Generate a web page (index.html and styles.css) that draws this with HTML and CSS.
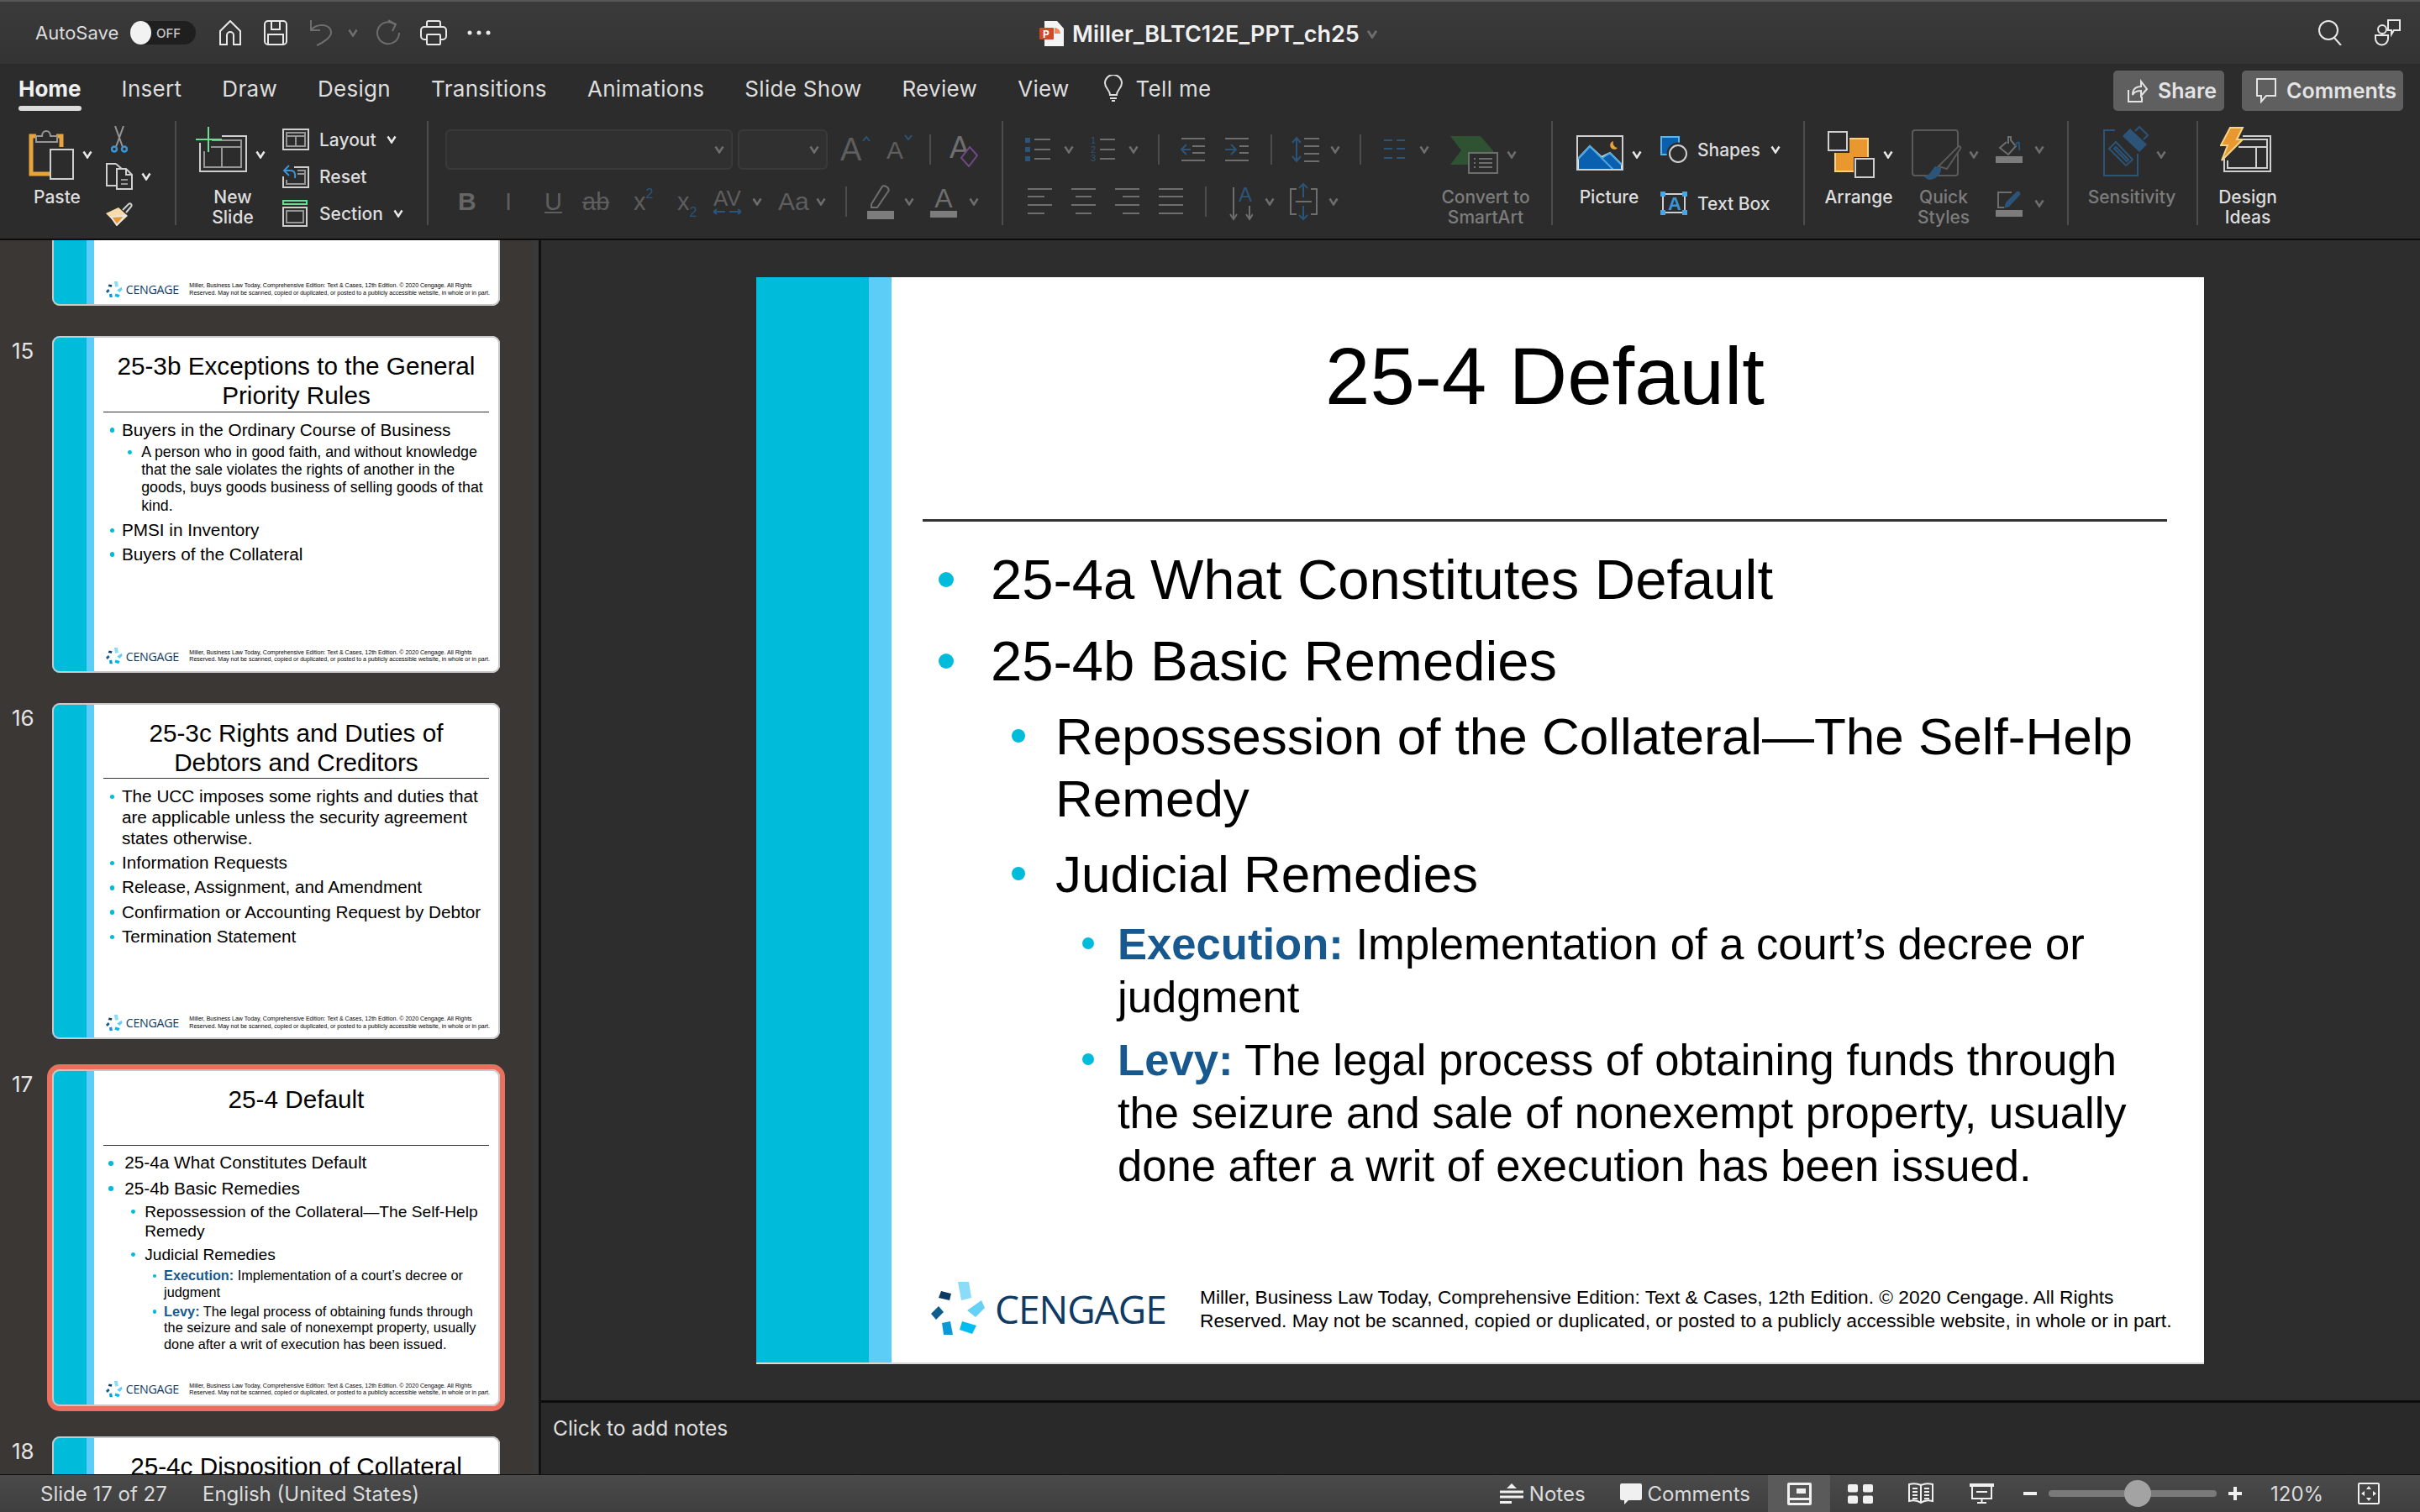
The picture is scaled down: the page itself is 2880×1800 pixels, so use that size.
FILE: index.html
```html
<!DOCTYPE html>
<html lang="en">
<head>
    <meta charset="UTF-8">
    <title>Miller_BLTC12E_PPT_ch25</title>
    <link rel="stylesheet" href="styles.css">
</head>
<body>
    <svg class="defs" width="0" height="0">
        <symbol id="chev" viewBox="0 0 12 10"><path d="M1.5 1.5L6 8.5l4.500-7"/></symbol>
        <symbol id="logo" viewBox="0 0 64 63">
            <path class="p1" d="M32 0h13l3 19-12 3z"/>
            <path class="p2" d="M60 22l4 9-11 11-10-8z"/>
            <path class="p3" d="M37 47l17 5-5 10-15-5z"/>
            <path class="p4" d="M13 49l10-2 3 16H15z"/>
            <path class="p5" d="M9 29l6 7-9 9-6-7z"/>
            <path class="p6" d="M12 11l12 3-2 8-13-3z"/>
        </symbol>
    </svg>

    <header class="titlebar">
        <div class="qat">
            <span class="autosave">AutoSave</span>
            <span class="toggle"><i class="knob"></i><b>OFF</b></span>
            <svg class="i-home" width="28" height="30" viewBox="0 0 28 30"><path d="M14 1L2 13v16h8V18a4 4 0 0 1 8 0v11h8V13z"/></svg>
            <svg class="i-save" width="28" height="30" viewBox="0 0 28 30"><rect x="1" y="1" width="26" height="28" rx="4"/><path d="M9 1v10h10V1M5 29V17h18v12"/></svg>
            <svg class="i-undo off" width="30" height="32" viewBox="0 0 30 32"><path d="M2 1v12h11M2 13c7-9 24-8 24 3 0 5-8 11-17 15"/></svg>
            <svg class="i-uchev off" width="12" height="10"><use href="#chev"/></svg>
            <svg class="i-redo off" width="30" height="32" viewBox="0 0 30 32"><path d="M23 6a13 13 0 1 0 5 10M15 1l9 5-4 8"/></svg>
            <svg class="i-print" width="32" height="30" viewBox="0 0 32 30"><path d="M8 8V3a2 2 0 0 1 2-2h12a2 2 0 0 1 2 2v5"/><rect x="1" y="8" width="30" height="15" rx="4"/><rect x="8" y="17" width="16" height="12" rx="1" class="fill-bar"/></svg>
            <svg class="i-dots" width="28" height="8" viewBox="0 0 28 8"><circle cx="3" cy="4" r="2.500"/><circle cx="14" cy="4" r="2.500"/><circle cx="25" cy="4" r="2.500"/></svg>
        </div>
        <div class="doc-title">
            <svg width="30" height="30" viewBox="0 0 30 30" class="ppt"><path class="ppt-page" d="M6 0h15l8 9v21H6z"/><rect class="ppt-red" x="0" y="8" width="17" height="14" rx="1"/><path class="ppt-pie" d="M18 8a7 7 0 0 1 7 7h-7z"/><text class="ppt-p" x="4" y="20">P</text></svg>
            <span>Miller_BLTC12E_PPT_ch25</span>
            <svg class="off" width="16" height="11"><use href="#chev"/></svg>
        </div>
        <div class="top-right">
            <svg width="28" height="30" viewBox="0 0 28 30"><circle cx="12" cy="12" r="11"/><path d="M19 21l8 9"/></svg>
            <svg width="32" height="32" viewBox="0 0 32 32"><circle cx="10" cy="12" r="5"/><path d="M2 19h15v4a7.500 7.500 0 0 1-15 0zM17 1h14v12h-7l-3 5v-5h-4z"/></svg>
        </div>
    </header>

    <section class="ribbon">
        <nav class="tabs">
            <a class="tab active">Home</a><a class="tab">Insert</a><a class="tab">Draw</a><a class="tab">Design</a><a class="tab">Transitions</a><a class="tab">Animations</a><a class="tab">Slide Show</a><a class="tab">Review</a><a class="tab">View</a>
            <span class="tell">
                <svg width="22" height="32" viewBox="0 0 22 32"><path d="M7 24c0-6-6-8-6-14a10 10 0 0 1 20 0c0 6-6 8-6 14zM7 28h8M9 31h4"/></svg>
                Tell me
            </span>
            <span class="share-btns">
                <button class="btn btn-share">
                    <svg width="24" height="30" viewBox="0 0 24 30"><path d="M1 14v14h16v-6M6 20c0-7 4-10 10-10V4l7 9-7 8v-6c-5 0-8 1-10 5z"/></svg>
                    Share
                </button>
                <button class="btn btn-comments">
                    <svg width="24" height="30" viewBox="0 0 24 30"><path d="M1 1h22v20H12l-6 7v-7H1z"/></svg>
                    Comments
                </button>
            </span>
        </nav>

        <div class="groups">
            <div class="group g-clip">
                <div class="big w80">
                    <div class="big-icon pl6">
                        <svg width="54" height="61" viewBox="0 0 54 61"><path class="s-orange" d="M9 9H3v45h22M33 9h6v13"/><path class="s-grey f-bar" d="M9 16V9h7c0-8 10-8 10 0h8v7z"/><rect class="s-light f-bar" x="26" y="25" width="27" height="35"/></svg>
                        <svg class="chev-big" width="12" height="10"><use href="#chev"/></svg>
                    </div>
                    <span class="label">Paste</span>
                </div>
                <div class="stack3 ml18">
                    <div class="srow"><svg class="ml6" width="20" height="32" viewBox="0 0 20 32"><path class="s-grey" d="M5 0l9 25M15 0L6 25"/><circle class="s-blue thick f-bar" cx="4" cy="27.500" r="3"/><circle class="s-blue thick f-bar" cx="16" cy="27.500" r="3"/></svg></div>
                    <div class="srow"><svg width="32" height="32" viewBox="0 0 32 32"><path class="s-light" d="M12 1H1v26h11M12 1l8 7"/><path class="s-light f-bar" d="M13 7h11l7 7v17H13z"/><path class="s-light" d="M24 7v7h7"/><path class="s-grey" d="M18 20h8M18 25h8"/></svg><svg class="ml10" width="12" height="10"><use href="#chev"/></svg></div>
                    <div class="srow"><svg width="32" height="30" viewBox="0 0 32 30"><path class="s-light" d="M20 11l7-7c2-2 5 1 3 3l-6 7"/><path class="f-yellow" d="M0 15l15-7 11 10-12 11z"/><path class="f-orange" d="M6 19l17-1-10 11z"/></svg></div>
                </div>
            </div>

            <div class="group g-slides">
                <div class="big w100">
                    <div class="big-icon pl6">
                        <svg class="up6" width="61" height="54" viewBox="0 0 61 54"><path class="s-light" d="M31 11h29v42H5V19"/><path class="s-grey" d="M19 16h35v32H10V29M18 24h36M31 24v24"/><path class="s-green" d="M15 0v30M0 15h31"/></svg>
                        <svg class="chev-big" width="12" height="10"><use href="#chev"/></svg>
                    </div>
                    <span class="label">New<br>Slide</span>
                </div>
                <div class="stack3 ml9">
                    <div class="srow"><svg width="32" height="26" viewBox="0 0 32 26"><rect class="s-light" x="1" y="1" width="30" height="24"/><path class="s-grey" d="M5 5h22v16H5zM5 9h22M16 9v12"/></svg><span class="cmd">Layout</span><svg class="ml12" width="12" height="10"><use href="#chev"/></svg></div>
                    <div class="srow"><svg width="32" height="28" viewBox="0 0 32 28"><path class="s-light" d="M1 14v13h30V3H14"/><path class="s-grey" d="M18 7h9v16H5v-5M18 11h9"/><path class="s-blue" d="M8 1L2 7l6 6M2 7h8c4 0 6 3 5 9"/></svg><span class="cmd">Reset</span></div>
                    <div class="srow"><svg width="30" height="32" viewBox="0 0 30 32"><rect class="s-green" x="1" y="1" width="28" height="4"/><rect class="s-light" x="1" y="9" width="28" height="22"/><rect class="s-grey" x="5" y="13" width="20" height="14"/></svg><span class="cmd cmd-sec">Section</span><svg class="ml12" width="12" height="10"><use href="#chev"/></svg></div>
                </div>
            </div>

            <div class="group g-font off">
                <div class="row font-r1">
                    <span class="combo"><svg width="12" height="10"><use href="#chev"/></svg></span>
                    <span class="combo"><svg width="12" height="10"><use href="#chev"/></svg></span>
                    <span class="glyph g-a1">A<svg class="caret" width="10" height="7" viewBox="0 0 10 7"><path class="s-bluedim" d="M1 6l4-5 4 5"/></svg></span>
                    <span class="glyph g-a2">A<svg class="caret" width="10" height="7" viewBox="0 0 10 7"><path class="s-bluedim" d="M1 1l4 5 4-5"/></svg></span>
                    <i class="vsep"></i>
                    <svg width="34" height="46" viewBox="0 0 34 46"><text class="svgt t-clear" x="0" y="33">A</text><path class="s-purple f-bar" d="M24 20l9 10-10 13-9-10z"/></svg>
                </div>
                <div class="row font-r2">
                    <b class="glyph">B</b>
                    <i class="glyph thin">I</i>
                    <u class="glyph">U</u>
                    <s class="glyph">ab</s>
                    <span class="glyph">x<sup>2</sup></span>
                    <span class="glyph">x<sub>2</sub></span>
                    <span class="av">AV<svg width="33" height="8" viewBox="0 0 33 8"><path class="s-bluedim" d="M0 4h14M4 1L0 4l4 3M19 4h14M29 1l4 3-4 3"/></svg></span>
                    <svg width="12" height="10"><use href="#chev"/></svg>
                    <span class="glyph aa">Aa</span>
                    <svg width="12" height="10"><use href="#chev"/></svg>
                    <i class="vsep"></i>
                    <svg width="32" height="42" viewBox="0 0 32 42"><path d="M5 24L18 3c2-2 5 0 7 2 1 2 1 3 0 4L12 28H5z"/><rect class="f-grey" x="0" y="32" width="32" height="10"/></svg>
                    <svg width="12" height="10"><use href="#chev"/></svg>
                    <span class="afill">A<i></i></span>
                    <svg width="12" height="10"><use href="#chev"/></svg>
                </div>
            </div>

            <div class="group g-para off">
                <div class="para-rows">
                    <div class="row para-r1">
                        <svg width="30" height="30" viewBox="0 0 30 30"><path class="f-bluedim" d="M0 1h6v6H0zM0 12h6v6H0zM0 23h6v6H0z"/><path d="M11 3h19M11 15h19M11 26h19"/></svg>
                        <svg width="12" height="10"><use href="#chev"/></svg>
                        <svg width="30" height="34" viewBox="0 0 30 34"><text class="svgt t-num" x="1" y="10">1</text><text class="svgt t-num" x="1" y="20.500">2</text><text class="svgt t-num" x="1" y="31">3</text><path d="M12 5h18M12 17h18M12 28h18"/></svg>
                        <svg width="12" height="10"><use href="#chev"/></svg>
                        <i class="vsep"></i>
                        <svg width="30" height="28" viewBox="0 0 30 28"><path d="M1 1h28M14 10h15M14 18h15M1 27h28"/><path class="s-bluedim" d="M12 14H2M7 8l-6 6 6 6"/></svg>
                        <svg width="30" height="28" viewBox="0 0 30 28"><path d="M1 1h28M18 10h11M18 18h11M1 27h28"/><path class="s-bluedim" d="M1 14h12M8 8l6 6-6 6"/></svg>
                        <i class="vsep"></i>
                        <svg width="33" height="32" viewBox="0 0 33 32"><path class="s-bluedim" d="M6 3v26M1 8l5-6 5 6M1 24l5 6 5-6"/><path d="M15 3h18M15 12h18M15 21h18M15 30h18"/></svg>
                        <svg width="12" height="10"><use href="#chev"/></svg>
                        <i class="vsep"></i>
                        <svg width="26" height="26" viewBox="0 0 26 26"><path class="s-bluedim" d="M0 2h10M15 2h10M0 12h10M15 12h10M0 23h10M15 23h10"/></svg>
                        <svg width="12" height="10"><use href="#chev"/></svg>
                    </div>
                    <div class="row para-r2">
                        <svg width="29" height="44" viewBox="0 0 29 44"><path d="M0 7h29M0 16h20M0 26h29M0 36h20"/></svg>
                        <svg width="29" height="44" viewBox="0 0 29 44"><path d="M0 7h29M5 16h19M0 26h29M5 36h19"/></svg>
                        <svg width="29" height="44" viewBox="0 0 29 44"><path d="M0 7h29M9 16h20M0 26h29M9 36h20"/></svg>
                        <svg width="29" height="44" viewBox="0 0 29 44"><path d="M0 7h29M0 16h29M0 26h29M0 36h29"/></svg>
                        <i class="vsep"></i>
                        <svg width="28" height="46" viewBox="0 0 28 46"><path d="M5 6v38M1 38l4 6 4-6M24 28v16M20 38l4 6 4-6"/><text class="svgt t-dir" x="11" y="23">A</text></svg>
                        <svg width="12" height="10"><use href="#chev"/></svg>
                        <svg width="33" height="46" viewBox="0 0 33 46"><path d="M8 8H1v30h7M25 8h7v30h-7M7 23h19"/><path class="s-bluedim" d="M16 18V2M11 7l5-5 5 5M16 28v16M11 39l5 5 5-5"/></svg>
                        <svg width="12" height="10"><use href="#chev"/></svg>
                    </div>
                </div>
                <div class="big w120">
                    <div class="big-icon pl17">
                        <svg width="58" height="46" viewBox="0 0 58 46"><path class="f-dgreen" d="M1 1h36l17 20H24v14H1l13-17z"/><rect class="s-dgrey f-bar" x="23" y="21" width="34" height="24"/><path class="s-dgrey" d="M29 28h2M35 28h16M29 33h2M35 33h16M29 38h2M35 38h16"/></svg>
                        <svg class="chev-big" width="12" height="10"><use href="#chev"/></svg>
                    </div>
                    <span class="label">Convert to<br>SmartArt</span>
                </div>
            </div>

            <div class="group g-insert">
                <div class="big w100">
                    <div class="big-icon pl11">
                        <svg class="up2" width="56" height="42" viewBox="0 0 56 42"><path class="f-blue" d="M2 41V28l14-15 14 13 10-5 14 14v6z"/><path class="s-skyline" d="M2 28l14-15 28 28M31 27l9-6 14 14"/><rect class="s-light" x="1" y="1" width="54" height="40"/><path class="f-sun" d="M44 7a5 5 0 1 0 5 8 6 6 0 0 1-5-8z"/></svg>
                        <svg class="chev-big" width="12" height="10"><use href="#chev"/></svg>
                    </div>
                    <span class="label bright">Picture</span>
                </div>
                <div class="stack2 ml11">
                    <div class="srow"><svg width="32" height="32" viewBox="0 0 32 32"><rect class="f-blue s-skyblue" x="1" y="1" width="21" height="21"/><circle class="s-ring" cx="21" cy="21" r="11"/><circle class="s-light" cx="21" cy="21" r="10"/></svg><span class="cmd">Shapes</span><svg class="ml12" width="12" height="10"><use href="#chev"/></svg></div>
                    <div class="srow"><svg width="32" height="28" viewBox="0 0 32 28"><rect class="s-light" x="3" y="3" width="26" height="22"/><path class="f-blue3" d="M0 0h6v6H0zM26 0h6v6h-6zM0 22h6v6H0zM26 22h6v6h-6z"/><text class="svgt t-box" x="9" y="22">A</text></svg><span class="cmd">Text Box</span></div>
                </div>
            </div>

            <div class="group g-draw">
                <div class="big w100">
                    <div class="big-icon pl13">
                        <svg width="56" height="56" viewBox="0 0 56 56"><rect class="f-orange s-cream" x="9" y="9" width="39" height="39"/><rect class="f-bar s-bar" x="0" y="0" width="26" height="26"/><rect class="f-bar s-bar" x="31" y="31" width="25" height="25"/><rect class="s-light" x="1" y="1" width="22" height="22"/><rect class="s-light" x="33" y="33" width="22" height="22"/></svg>
                        <svg class="chev-big" width="12" height="10"><use href="#chev"/></svg>
                    </div>
                    <span class="label bright">Arrange</span>
                </div>
                <div class="big w90 ml6 off">
                    <div class="big-icon pl7">
                        <svg width="60" height="60" viewBox="0 0 60 60"><rect class="s-qs" x="1" y="1" width="54" height="54" rx="3"/><path class="s-qs f-bar" d="M32 44L55 21c2-2 4 0 3 2L42 47z"/><path class="f-bluedim" d="M15 56c7-1 9-8 13-12l7 2c1 6-5 13-13 14-3 0-6-2-7-4z"/></svg>
                        <svg class="chev-qs" width="12" height="10"><use href="#chev"/></svg>
                    </div>
                    <span class="label">Quick<br>Styles</span>
                </div>
                <div class="stack2 ml17 off">
                    <div class="srow"><svg width="32" height="32" viewBox="0 0 32 32"><path d="M13 7l-8 7 10 8 9-10-6-7V1h-3v8"/><path class="s-bluedim" d="M24 12c0-5 3-5 4-4-1 2 1 5 0 9"/><rect class="f-grey" x="0" y="24" width="32" height="8"/></svg><svg class="ml14" width="12" height="10"><use href="#chev"/></svg></div>
                    <div class="srow"><svg width="32" height="32" viewBox="0 0 32 32"><path d="M19 3H3v18h7"/><path class="f-bluedim" d="M10 22l2-7L25 2c2-2 6 2 4 4L16 20z"/><rect class="f-grey" x="0" y="24" width="32" height="8"/></svg><svg class="ml14" width="12" height="10"><use href="#chev"/></svg></div>
                </div>
            </div>

            <div class="group g-sens off">
                <div class="big w120">
                    <div class="big-icon pl26">
                        <svg class="up3" width="54" height="60" viewBox="0 0 54 60"><path class="s-bluedim" d="M14 5H1v54h40V33"/><path class="f-bluedim" d="M23 12l9-9 20 19-9 9z"/><path class="s-bluedim" d="M38 6l5-5 10 10-5 5M7 27l8-8 20 21-8 7zM13 27l2-2 15 15-2 2z"/></svg>
                        <svg class="chev-sens" width="12" height="10"><use href="#chev"/></svg>
                    </div>
                    <span class="label">Sensitivity</span>
                </div>
            </div>

            <div class="group g-ideas">
                <div class="big w100">
                    <div class="big-icon pl17">
                        <svg class="up6" width="61" height="54" viewBox="0 0 61 54"><path class="s-light" d="M27 11h33v42H5V38M23 15h33v34H9v-9M22 24h34M43 24v25"/><path class="f-orange s-cream" d="M12 1h15l-7 14h7L2 40l7-18H1z"/></svg>
                    </div>
                    <span class="label bright">Design<br>Ideas</span>
                </div>
            </div>
        </div>
    </section>

    <main class="workspace">
        <aside class="panel">
            <div class="thumbs">
                <div class="thumb-row">
                    <span class="num"></span>
                    <div class="slide thumb">
                        <div class="band"></div><div class="band-light"></div>
                        <div class="content">
                            <div class="foot">
                                <svg class="logo"><use href="#logo"/></svg>
                                <span class="wordmark">CENGAGE</span>
                                <p class="legal">Miller, Business Law Today, Comprehensive Edition: Text &amp; Cases, 12th Edition. © 2020 Cengage. All Rights<br>Reserved. May not be scanned, copied or duplicated, or posted to a publicly accessible website, in whole or in part.</p>
                            </div>
                        </div>
                    </div>
                </div>

                <div class="thumb-row">
                    <span class="num">15</span>
                    <div class="slide thumb">
                        <div class="band"></div><div class="band-light"></div>
                        <div class="content">
                            <h2 class="title">25-3b Exceptions to the General<br>Priority Rules</h2>
                            <ul class="body tight">
                                <li class="l1">Buyers in the Ordinary Course of Business</li>
                                <li class="l2 big-l2">A person who in good faith, and without knowledge that the sale violates the rights of another in the goods, buys goods business of selling goods of that kind.</li>
                                <li class="l1">PMSI in Inventory</li>
                                <li class="l1">Buyers of the Collateral</li>
                            </ul>
                            <div class="foot">
                                <svg class="logo"><use href="#logo"/></svg>
                                <span class="wordmark">CENGAGE</span>
                                <p class="legal">Miller, Business Law Today, Comprehensive Edition: Text &amp; Cases, 12th Edition. © 2020 Cengage. All Rights<br>Reserved. May not be scanned, copied or duplicated, or posted to a publicly accessible website, in whole or in part.</p>
                            </div>
                        </div>
                    </div>
                </div>

                <div class="thumb-row">
                    <span class="num">16</span>
                    <div class="slide thumb">
                        <div class="band"></div><div class="band-light"></div>
                        <div class="content">
                            <h2 class="title">25-3c Rights and Duties of<br>Debtors and Creditors</h2>
                            <ul class="body tight spaced">
                                <li class="l1">The UCC imposes some rights and duties that are applicable unless the security agreement states otherwise.</li>
                                <li class="l1">Information Requests</li>
                                <li class="l1">Release, Assignment, and Amendment</li>
                                <li class="l1">Confirmation or Accounting Request by Debtor</li>
                                <li class="l1">Termination Statement</li>
                            </ul>
                            <div class="foot">
                                <svg class="logo"><use href="#logo"/></svg>
                                <span class="wordmark">CENGAGE</span>
                                <p class="legal">Miller, Business Law Today, Comprehensive Edition: Text &amp; Cases, 12th Edition. © 2020 Cengage. All Rights<br>Reserved. May not be scanned, copied or duplicated, or posted to a publicly accessible website, in whole or in part.</p>
                            </div>
                        </div>
                    </div>
                </div>

                <div class="thumb-row">
                    <span class="num">17</span>
                    <div class="slide thumb selected">
                        <div class="band"></div><div class="band-light"></div>
                        <div class="content">
                            <h2 class="title">25-4 Default</h2>
                            <ul class="body">
                                <li class="l1">25-4a What Constitutes Default</li>
                                <li class="l1">25-4b Basic Remedies</li>
                                <li class="l2">Repossession of the Collateral—The Self-Help Remedy</li>
                                <li class="l2">Judicial Remedies</li>
                                <li class="l3"><b>Execution:</b> Implementation of a court’s decree or judgment</li>
                                <li class="l3"><b>Levy:</b> The legal process of obtaining funds through the seizure and sale of nonexempt property, usually done after a writ of execution has been issued.</li>
                            </ul>
                            <div class="foot">
                                <svg class="logo"><use href="#logo"/></svg>
                                <span class="wordmark">CENGAGE</span>
                                <p class="legal">Miller, Business Law Today, Comprehensive Edition: Text &amp; Cases, 12th Edition. © 2020 Cengage. All Rights<br>Reserved. May not be scanned, copied or duplicated, or posted to a publicly accessible website, in whole or in part.</p>
                            </div>
                        </div>
                    </div>
                </div>

                <div class="thumb-row">
                    <span class="num">18</span>
                    <div class="slide thumb">
                        <div class="band"></div><div class="band-light"></div>
                        <div class="content">
                            <h2 class="title">25-4c Disposition of Collateral</h2>
                        </div>
                    </div>
                </div>
            </div>
        </aside>

        <div class="editor">
            <div class="canvas">
                <div class="slide main-slide">
                    <div class="band"></div><div class="band-light"></div>
                    <div class="content">
                        <h1 class="title">25-4 Default</h1>
                        <ul class="body">
                            <li class="l1">25-4a What Constitutes Default</li>
                            <li class="l1">25-4b Basic Remedies</li>
                            <li class="l2">Repossession of the Collateral—The Self-Help Remedy</li>
                            <li class="l2">Judicial Remedies</li>
                            <li class="l3"><b>Execution:</b> Implementation of a court’s decree or judgment</li>
                            <li class="l3"><b>Levy:</b> The legal process of obtaining funds through the seizure and sale of nonexempt property, usually done after a writ of execution has been issued.</li>
                        </ul>
                        <div class="foot">
                            <svg class="logo"><use href="#logo"/></svg>
                            <span class="wordmark">CENGAGE</span>
                            <p class="legal">Miller, Business Law Today, Comprehensive Edition: Text &amp; Cases, 12th Edition. © 2020 Cengage. All Rights<br>Reserved. May not be scanned, copied or duplicated, or posted to a publicly accessible website, in whole or in part.</p>
                        </div>
                    </div>
                </div>
            </div>
            <div class="notes">Click to add notes</div>
        </div>
    </main>

    <footer class="statusbar">
        <span class="st-slide">Slide 17 of 27</span>
        <span class="st-lang">English (United States)</span>
        <div class="st-right">
            <span class="st-item">
                <svg width="28" height="24" viewBox="0 0 28 24"><path class="f-white" d="M14 0l6 6H8z"/><path class="s-white" d="M0 10h28M0 16h28M0 22.500h14"/></svg>
                Notes
            </span>
            <span class="st-item st-comments">
                <svg width="26" height="25" viewBox="0 0 26 25"><path class="f-white" d="M2 0h22a2 2 0 0 1 2 2v16a2 2 0 0 1-2 2H10l-5 5v-5H2a2 2 0 0 1-2-2V2a2 2 0 0 1 2-2z"/></svg>
                Comments
            </span>
            <span class="view active"><svg width="29" height="27" viewBox="0 0 29 27"><rect class="f-white" width="29" height="27" rx="2"/><path class="f-slate" d="M3 3h23v15H3zM3 21h23v3H3z"/><rect class="f-white" x="11" y="7" width="11" height="6"/></svg></span>
            <span class="view"><svg width="30" height="23" viewBox="0 0 30 23"><rect class="f-white" width="12" height="9.500" rx="2"/><rect class="f-white" x="18" width="12" height="9.500" rx="2"/><rect class="f-white" y="13.500" width="12" height="9.500" rx="2"/><rect class="f-white" x="18" y="13.500" width="12" height="9.500" rx="2"/></svg></span>
            <span class="view"><svg width="30" height="26" viewBox="0 0 30 26"><path class="s-thin" d="M15 3C11 1 5 1 1 2v20c4-1 10-1 14 2 4-3 10-3 14-2V2c-4-1-10-1-14 1zM15 3v21M5 7h6M5 11h6M5 15h6M5 19h6M19 7h6M19 11h6M19 15h6M19 19h6"/></svg></span>
            <span class="view"><svg width="29" height="24" viewBox="0 0 29 24"><rect class="f-white" width="29" height="4"/><path class="s-thin" d="M3 4v14h23V4M8 10h13M14.500 18v6M9 23h11"/></svg></span>
            <span class="zoom-minus"></span>
            <span class="slider"><i class="thumb-knob"></i></span>
            <span class="zoom-plus"></span>
            <span class="zoom-pct">120%</span>
            <svg class="fit" width="26" height="26" viewBox="0 0 26 26"><rect class="s-thin" x="1" y="1" width="24" height="24" rx="1"/><path class="f-white" d="M13 4l3 4h-6zM13 22l3-4h-6zM4 13l4-3v6zM22 13l-4-3v6z"/></svg>
        </div>
    </footer>
</body>
</html>
```

FILE: styles.css
```css
* {
    margin: 0;
    padding: 0;
    box-sizing: border-box;
}

html, body {
    width: 2880px;
    height: 1800px;
    overflow: hidden;
}

body {
    display: flex;
    flex-direction: column;
    font-family: 'Inter', 'Roboto', sans-serif;
    background: #2b2b2b;
    color: #e8e8e8;
}

svg {
    fill: none;
    stroke: currentColor;
    stroke-width: 2;
    flex: none;
}

.defs { position: absolute; }
#chev path { stroke-width: 2.5; }

/* title bar */
.titlebar {
    height: 76px;
    flex: none;
    display: flex;
    align-items: center;
    position: relative;
    border-top: 2px solid #565656;
    background: linear-gradient(#3a3a3a, #343434);
}

.qat {
    display: flex;
    align-items: center;
    padding-left: 42px;
}

.autosave { font-size: 22px; color: #dcdcdc; width: 113px; }

.toggle {
    width: 78px;
    height: 28px;
    border-radius: 14px;
    background: #1f1f1f;
    display: flex;
    align-items: center;
    gap: 6px;
}
.toggle .knob { width: 25px; height: 28px; border-radius: 50%; background: #f2f2f2; }
.toggle b { font-size: 15px; font-weight: 500; color: #c8c8c8; }

.i-home { margin-left: 27px; }
.i-save { margin-left: 26px; }
.i-undo { margin-left: 26px; }
.i-uchev { margin-left: 16px; }
.i-redo { margin-left: 21px; }
.i-print { margin-left: 23px; }
.i-dots { margin-left: 24px; fill: #e8e8e8; stroke: none; }

.off { color: #6e6e6e; }

.doc-title {
    position: absolute;
    left: 1237px;
    top: 1px;
    height: 74px;
    display: flex;
    align-items: center;
    font-size: 27px;
    font-weight: 600;
    color: #f0f0f0;
    white-space: nowrap;
}
.doc-title .ppt { margin-right: 9px; stroke: none; }
.doc-title span { margin-right: 7px; }
.ppt-page { fill: #f4f4f4; }
.ppt-red { fill: #d04a2a; }
.ppt-pie { fill: #f08a5c; }
.ppt-p { fill: #fff; font-size: 12px; font-weight: 700; }

.top-right {
    margin-left: auto;
    display: flex;
    align-items: center;
    gap: 38px;
    padding-right: 23px;
}

/* ribbon */
.ribbon {
    height: 210px;
    flex: none;
    background: #2c2c2c;
    border-bottom: 2px solid #0c0c0c;
}

.tabs {
    height: 68px;
    display: flex;
    align-items: center;
    padding: 0 0 10px 22px;
    font-size: 26px;
    letter-spacing: 0.3px;
    position: relative;
    color: #dedede;
}

.tab { margin-right: 48px; position: relative; }
.tab.active { font-weight: 700; color: #f0f0f0; letter-spacing: 0; }
.tab.active::after {
    content: "";
    position: absolute;
    left: 0;
    right: 0;
    top: 36px;
    height: 6px;
    border-radius: 3px;
    background: #dcdcdc;
}

.tell { display: flex; align-items: center; gap: 16px; margin-left: -7px; }

.share-btns {
    margin-left: auto;
    display: flex;
    gap: 21px;
    padding-right: 20px;
    margin-top: 6px;
}

.btn {
    height: 48px;
    border: none;
    border-radius: 5px;
    background: #5f5f5f;
    color: #e4e4e4;
    font: 600 25px 'Inter', sans-serif;
    display: flex;
    align-items: center;
    gap: 12px;
}
.btn-share { width: 132px; padding-left: 17px; }
.btn-comments { width: 192px; padding-left: 17px; }

.groups { display: flex; height: 124px; }

.group {
    height: 124px;
    display: flex;
    align-items: flex-start;
    border-right: 2px solid #4d4d4d;
    flex: none;
}
.g-clip { width: 210px; padding-left: 28px; }
.g-slides { width: 300px; padding-left: 17px; }
.g-font { width: 684px; padding-left: 20px; padding-top: 10px; flex-direction: column; align-items: stretch; }
.g-para { width: 654px; padding-left: 26px; padding-top: 10px; }
.g-insert { width: 300px; padding-left: 17px; }
.g-draw { width: 314px; padding-left: 14px; }
.g-sens { width: 154px; padding-left: 15px; }
.g-ideas { width: 200px; padding-left: 9px; border-right: none; }

.big { display: flex; flex-direction: column; flex: none; }
.big-icon { height: 79px; display: flex; align-items: center; }
.big .label {
    font-size: 21px;
    line-height: 24px;
    text-align: center;
    color: #dedede;
    font-weight: 500;
    white-space: nowrap;
}
.off .label { color: #7c7c7c; }
.g-para .big { margin-top: -10px; }
.g-para .big .label { color: #7c7c7c; }

.up2 { margin-bottom: 4px; }
.up3 { margin-bottom: 7px; }
.up6 { margin-bottom: 12px; }

.w80 { width: 80px; }
.w90 { width: 90px; }
.w100 { width: 100px; }
.w120 { width: 120px; }
.pl6 { padding-left: 6px; }
.pl7 { padding-left: 7px; }
.pl11 { padding-left: 11px; }
.pl13 { padding-left: 13px; }
.pl17 { padding-left: 17px; }
.pl26 { padding-left: 26px; }
.ml6 { margin-left: 6px; }
.ml9 { margin-left: 9px; }
.ml10 { margin-left: 10px; }
.ml11 { margin-left: 11px; }
.ml12 { margin-left: 12px; }
.ml14 { margin-left: 14px; }
.ml17 { margin-left: 17px; }
.ml18 { margin-left: 18px; }
.chev-big { margin-left: 10px; }
.chev-qs { margin-left: 8px; }
.chev-sens { margin-left: 9px; }

.stack3, .stack2 { display: flex; flex-direction: column; }
.stack3 .srow { height: 44px; display: flex; align-items: center; }
.stack2 { padding-top: 3px; }
.stack2 .srow { height: 62px; display: flex; align-items: center; }
.stack2 .srow + .srow { margin-top: 2px; }
.cmd { font-size: 21px; font-weight: 500; margin-left: 12px; color: #dedede; white-space: nowrap; }
.cmd-sec { margin-left: 14px; }

.row { display: grid; align-items: center; }
.font-r1 {
    height: 48px;
    grid-template-columns: 348px 122px 55px 51px 24px auto;
    justify-items: start;
}
.font-r2 {
    height: 48px;
    margin-top: 14px;
    margin-left: 15px;
    grid-template-columns: 56px 47px 45px 61px 52px 43px 46px 31px 45px 35px 26px 44px 31px 46px 12px;
    justify-items: start;
}

.combo {
    height: 48px;
    width: 342px;
    border: 2px solid #3a3a3a;
    border-radius: 6px;
    background: #303030;
    display: flex;
    align-items: center;
    justify-content: flex-end;
    padding-right: 8px;
}
.combo + .combo { width: 107px; }

.vsep { width: 2px; height: 36px; background: #4d4d4d; display: block; }

.glyph {
    font: 400 29px 'Liberation Sans', sans-serif;
    color: #5e5e5e;
    line-height: 36px;
    white-space: nowrap;
}
b.glyph { font-weight: 700; color: #666; font-size: 30px; }
.glyph sup, .glyph sub { font-size: 16px; color: #2c5478; }
.glyph sup { vertical-align: 14px; line-height: 0; }
.glyph sub { vertical-align: -8px; line-height: 0; }
.g-a1 { font-size: 38px; }
.g-a2 { font-size: 30px; }
.caret { margin-left: 1px; vertical-align: 22px; }
.aa { font-size: 30px; }

.svgt { fill: currentColor; stroke: none; font-family: 'Liberation Sans', sans-serif; }
.t-clear { font-size: 36px; }
.t-num { font-size: 11px; fill: #2c5478; }
.t-dir { font-size: 24px; fill: #2c5478; }
.t-box { font-size: 22px; font-weight: 700; fill: #3a94d6; }

.av {
    display: flex;
    flex-direction: column;
    align-items: center;
    font: 400 26px/24px 'Liberation Sans', sans-serif;
    color: #5e5e5e;
}

.afill {
    width: 32px;
    display: flex;
    flex-direction: column;
    align-items: center;
    font: 400 32px/30px 'Liberation Sans', sans-serif;
    color: #6e6e6e;
}
.afill i { display: block; width: 32px; height: 8px; background: #7c7c7c; }

.para-rows { width: 488px; flex: none; }
.para-r1 {
    height: 48px;
    grid-template-columns: 46px 31px 46px 35px 27px 52px 55px 25px 46px 35px 29px 42px 12px;
    justify-items: start;
}
.para-r2 {
    height: 48px;
    margin-top: 14px;
    margin-left: 3px;
    grid-template-columns: 52px 52px 52px 55px 29px 42px 30px 46px 12px;
    justify-items: start;
}

.s-orange { stroke: #e8a33c; stroke-width: 5; }
.s-grey { stroke: #969696; }
.s-light { stroke: #cfcfcf; }
.s-blue { stroke: #3a94d6; }
.thick { stroke-width: 2.5; }
.s-bluedim { stroke: #2c5478; }
.s-green { stroke: #6fdc8f; }
.s-purple { stroke: #6f4a86; }
.s-dgrey { stroke: #6e6e6e; }
.s-qs { stroke: #5a5a5a; }
.s-skyline { stroke: #4aa6e0; }
.s-skyblue { stroke: #5cb4ea; }
.s-cream { stroke: #f5d48a; }
.s-bar { stroke: none; }
.s-ring { stroke: #2c2c2c; stroke-width: 5; fill: #2c2c2c; }
.f-yellow { fill: #f5dcaa; stroke: none; }
.f-orange { fill: #e8982f; }
.f-grey { fill: #7c7c7c; stroke: none; }
.f-bluedim { fill: #2c5478; stroke: none; }
.f-dgreen { fill: #2f5233; stroke: none; }
.f-bar { fill: #2c2c2c; }
.fill-bar { fill: #343434; }
.f-blue { fill: #0a5fae; }
.f-blue3 { fill: #4aa6e0; stroke: none; }
.f-sun { fill: #e8a33c; stroke: none; }

/* workspace */
.workspace {
    flex: 1;
    display: flex;
    min-height: 0;
}

.panel {
    width: 644px;
    flex: none;
    overflow: hidden;
    background: linear-gradient(to right, #3b3735 633px, #3a3a3a 633px);
    border-right: 3px solid #111;
}

.thumbs {
    margin-top: -322px;
    display: flex;
    flex-direction: column;
    gap: 36px;
}

.thumb-row { display: flex; }

.num {
    width: 62px;
    flex: none;
    padding: 1px 0 0 14px;
    font-size: 26px;
    line-height: 34px;
    color: #e4e4e4;
}

/* slide: every length is a multiple of --u, so the thumbnails are the same slide scaled */
.slide {
    --u: 1px;
    width: calc(1723 * var(--u));
    height: calc(1294 * var(--u));
    flex: none;
    position: relative;
    display: flex;
    overflow: hidden;
    background: #fff;
    color: #000;
    font-family: 'Liberation Sans', Arial, sans-serif;
}

.thumb {
    --u: 0.3095px;
    border-radius: 9px;
}
.thumb::after {
    content: "";
    position: absolute;
    inset: 0;
    border: 2px solid #c9c9c9;
    border-radius: 9px;
}
.thumb.selected {
    overflow: visible;
    box-shadow: 0 0 0 6px #e8705c;
}
.thumb.selected .band { border-radius: 9px 0 0 9px; }

.main-slide { border-bottom: 2px solid #d8d8d8; }

.band { width: calc(134 * var(--u)); background: #00bcdb; flex: none; }
.band-light { width: calc(27 * var(--u)); background: #5bcdf7; flex: none; }

.content {
    flex: 1;
    min-width: 0;
    display: flex;
    flex-direction: column;
}

.title {
    height: calc(291 * var(--u));
    flex: none;
    padding-top: calc(61 * var(--u));
    font-size: calc(96 * var(--u));
    line-height: calc(113 * var(--u));
    font-weight: 400;
    text-align: center;
    border-bottom: calc(3 * var(--u)) solid #333;
    margin: 0 calc(44 * var(--u)) 0 calc(37 * var(--u));
}

.body {
    list-style: none;
    padding-top: calc(29 * var(--u));
    padding-right: calc(40 * var(--u));
}

.l1, .l2, .l3 { position: relative; }
.l1::before, .l2::before, .l3::before {
    content: "";
    position: absolute;
    border-radius: 50%;
    background: #00bcdb;
}

.l1 {
    font-size: calc(67 * var(--u));
    line-height: calc(80 * var(--u));
    margin: 0 0 calc(17 * var(--u)) calc(118 * var(--u));
}
.l1::before {
    width: calc(18 * var(--u));
    height: calc(18 * var(--u));
    left: calc(-62 * var(--u));
    top: calc(31 * var(--u));
}

.l2 {
    font-size: calc(62 * var(--u));
    line-height: calc(74.5 * var(--u));
    margin: calc(-4.5 * var(--u)) 0 calc(20 * var(--u)) calc(195 * var(--u));
}
.l2::before {
    width: calc(16 * var(--u));
    height: calc(16 * var(--u));
    left: calc(-52 * var(--u));
    top: calc(28 * var(--u));
}

.l3 {
    font-size: calc(52.6 * var(--u));
    line-height: calc(63 * var(--u));
    margin: calc(-6.5 * var(--u)) 0 calc(18 * var(--u)) calc(269 * var(--u));
}
.l3::before {
    width: calc(14 * var(--u));
    height: calc(14 * var(--u));
    left: calc(-42 * var(--u));
    top: calc(24 * var(--u));
}
.l3 b { color: #17598f; }

.tight .l1 { margin-left: calc(107 * var(--u)); margin-bottom: calc(12 * var(--u)); }
.tight.spaced .l1 { margin-bottom: calc(15 * var(--u)); }
.tight .l1::before { left: calc(-46 * var(--u)); }
.tight .big-l2 {
    font-size: calc(57.4 * var(--u));
    line-height: calc(69 * var(--u));
    margin-left: calc(182 * var(--u));
    margin-top: calc(-1 * var(--u));
}

.foot {
    margin-top: auto;
    height: calc(63 * var(--u));
    margin-bottom: calc(33 * var(--u));
    flex: none;
    display: flex;
    align-items: center;
    padding-left: calc(47 * var(--u));
}

.logo {
    width: calc(64 * var(--u));
    height: calc(63 * var(--u));
    stroke: none;
    flex: none;
}
.p1 { fill: #8adcf9; }
.p2 { fill: #66d0f5; }
.p3 { fill: #00bcf0; }
.p4 { fill: #0b9ad6; }
.p5 { fill: #0e5f8f; }
.p6 { fill: #0c3a63; }

.wordmark {
    font-family: 'Open Sans', sans-serif;
    font-size: calc(46 * var(--u));
    color: #0e3a63;
    margin-left: calc(12 * var(--u));
    width: calc(244 * var(--u));
    letter-spacing: calc(-1 * var(--u));
    flex: none;
}

.legal {
    font-size: calc(22.7 * var(--u));
    line-height: calc(27.5 * var(--u));
    padding-top: calc(2 * var(--u));
    white-space: nowrap;
}

/* editor */
.editor {
    flex: 1;
    min-width: 0;
    display: flex;
    flex-direction: column;
}

.canvas {
    flex: 1;
    padding: 44px 0 0 256px;
    background: #2d2d2d;
}

.notes {
    height: 88px;
    flex: none;
    border-top: 3px solid #0c0c0c;
    background: #292929;
    padding: 15px 0 0 14px;
    font-size: 24.5px;
    color: #e0e0e0;
}

/* status bar */
.statusbar {
    height: 45px;
    flex: none;
    display: flex;
    align-items: center;
    font-size: 24px;
    color: #dcdcdc;
    border-top: 1px solid #111;
    background: linear-gradient(#4a4a4a, #3f3f3f);
}

.st-slide { margin-left: 48px; width: 193px; }

.st-right {
    margin-left: auto;
    height: 100%;
    display: flex;
    align-items: center;
}

.st-item { display: flex; align-items: center; gap: 7px; }
.st-comments { margin-left: 41px; }

.s-white { stroke: #f0f0f0; stroke-width: 3; }
.s-thin { stroke: #f0f0f0; stroke-width: 2; }
.f-white { fill: #f0f0f0; stroke: none; }
.f-slate { fill: #555; stroke: none; }

.view { width: 72px; height: 100%; display: flex; align-items: center; justify-content: center; }
.view.active { background: #5a5a5a; margin-left: 21px; width: 74px; }

.zoom-minus { width: 16px; height: 4px; background: #f0f0f0; margin-left: 14px; }
.slider {
    width: 200px;
    height: 8px;
    margin-left: 14px;
    border-radius: 4px;
    background: #7a7a7a;
    position: relative;
}
.thumb-knob {
    position: absolute;
    left: 90px;
    top: -12px;
    width: 32px;
    height: 32px;
    border-radius: 50%;
    background: #a3a3a3;
}
.zoom-plus {
    width: 16px;
    height: 16px;
    margin-left: 14px;
    background: linear-gradient(#f0f0f0, #f0f0f0) center / 100% 4px no-repeat,
                linear-gradient(#f0f0f0, #f0f0f0) center / 4px 100% no-repeat;
}
.zoom-pct { margin-left: 34px; width: 104px; }
.fit { margin-right: 48px; }
```
